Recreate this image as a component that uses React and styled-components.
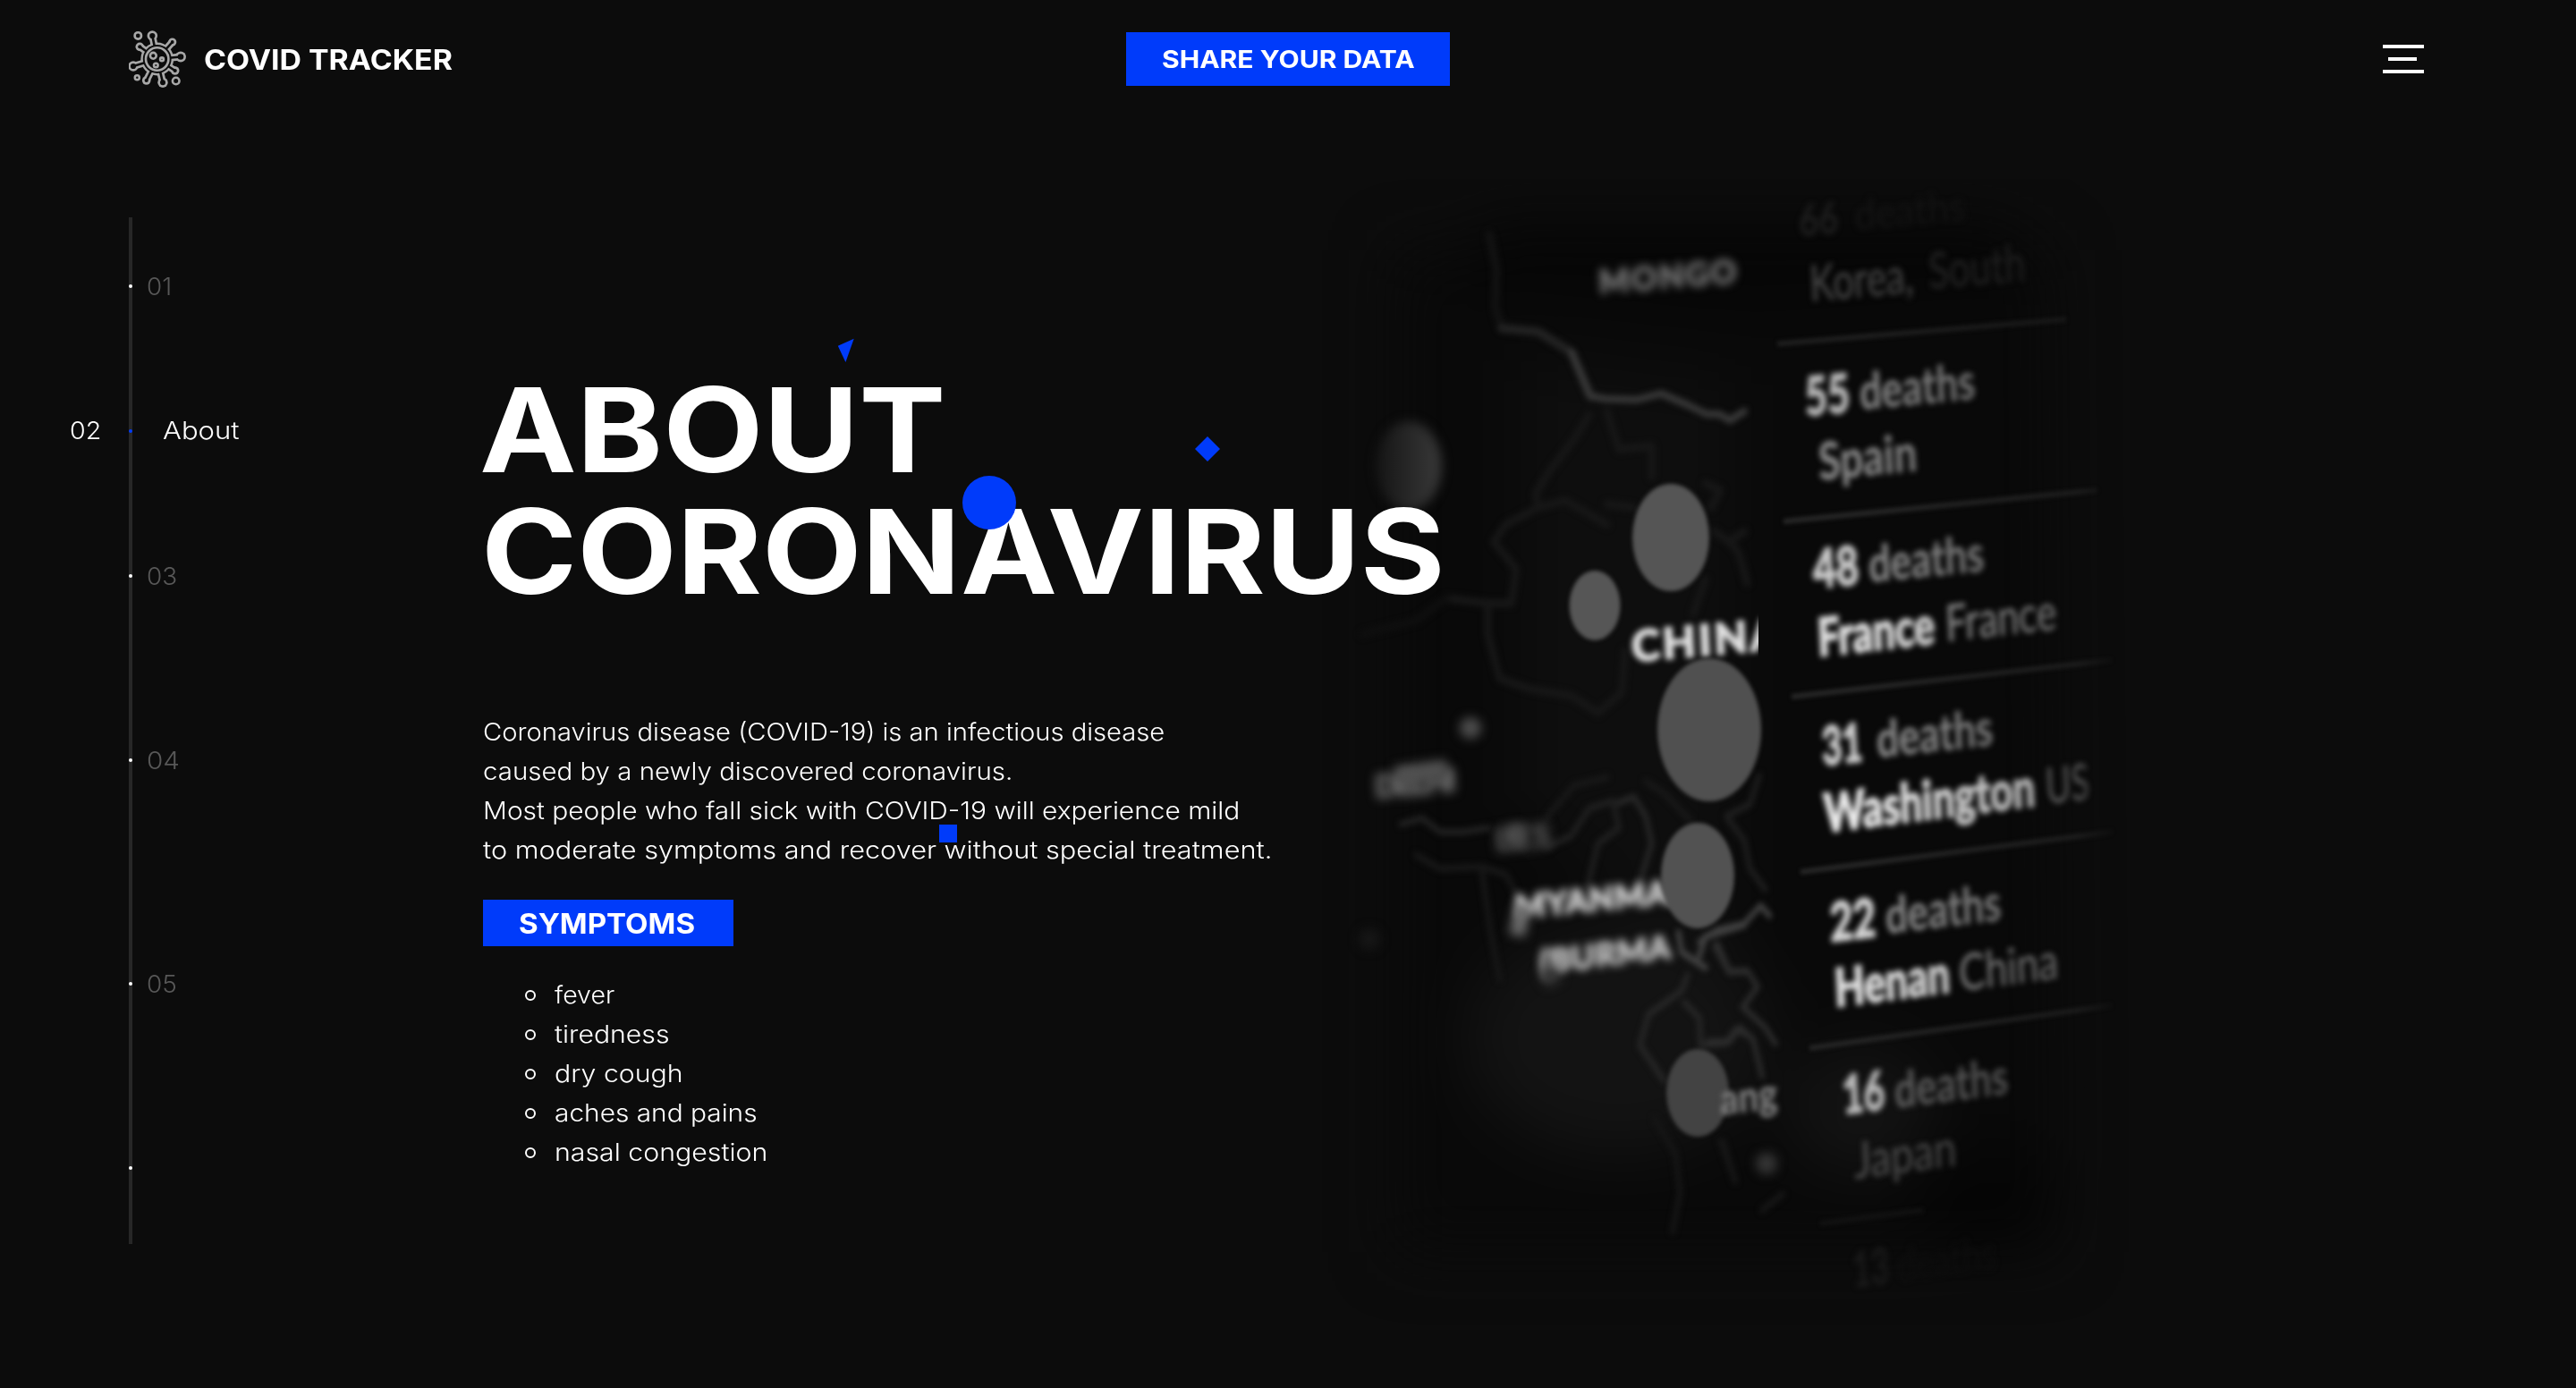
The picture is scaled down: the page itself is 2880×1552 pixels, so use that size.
import React from 'react';
import styled, { createGlobalStyle } from 'styled-components';

const INK = '#0c0c0c';
const BLUE = '#003bfa';

const GlobalStyle = createGlobalStyle`
  * { box-sizing: border-box; }
  html, body { margin: 0; background: ${INK}; }
  body { font-family: Inter, "Liberation Sans", sans-serif; color: #fff; overflow: hidden; }
  h1, h2, p, ul, ol { margin: 0; padding: 0; font-weight: inherit; list-style: none; }
`;

const Page = styled.div`
  position: relative;
  display: flex;
  flex-direction: column;
  width: 2880px;
  height: 1552px;
  overflow: hidden;
  background: ${INK};
`;

const Wide = styled.span`
  display: inline-block;
  white-space: nowrap;
  transform: scaleX(${(p) => p.$x});
  transform-origin: 0 50%;
`;

/* ---------- header ---------- */

const Header = styled.header`
  display: grid;
  grid-template-columns: 1fr 362px 1fr;
  align-items: center;
  flex: none;
  height: 132px;
  padding: 0 170px 0 144px;
`;

const Brand = styled.a`
  display: flex;
  align-items: center;
  gap: 20px;
  font-size: 31px;
  line-height: 40px;
  font-weight: 700;
`;

const BrandName = styled.span`
  padding-top: 2px;
`;

const ShareButton = styled.button`
  width: 362px;
  height: 60px;
  margin-left: 13px;
  padding: 0 0 0 40px;
  border: 0;
  background: ${BLUE};
  color: #fff;
  font: 700 27px/61px Inter, "Liberation Sans", sans-serif;
  text-align: left;
`;

const Burger = styled.div`
  justify-self: end;
  display: flex;
  flex-direction: column;
  align-items: center;
  gap: 10px;
  width: 46px;
`;

const BurgerBar = styled.span`
  width: ${(p) => (p.$short ? 32 : 46)}px;
  height: 4px;
  margin-right: ${(p) => (p.$short ? 2 : 0)}px;
  background: #fff;
`;

/* ---------- section navigation ---------- */

const Main = styled.main`
  display: flex;
  flex: 1;
  align-items: flex-start;
`;

const SectionNav = styled.nav`
  flex: none;
  width: 540px;
  padding-top: 111px;
`;

const Stop = styled.div`
  display: grid;
  grid-template-columns: 144px 4px 1fr;
  height: ${(p) => p.$h}px;
  padding-top: ${(p) => p.$top}px;
  align-content: start;
  align-items: center;
  background: linear-gradient(#272727, #272727) 144px 0 / 4px 100% no-repeat;
  font-size: 27px;
  line-height: 40px;
  font-weight: 300;
  color: ${(p) => (p.$active ? '#fff' : '#585858')};
`;

const StopIndex = styled.span`
  height: 40px;
  padding-left: 78px;
`;

const StopDot = styled.i`
  width: 4px;
  height: 4px;
  border-radius: 2px;
  background: ${(p) => (p.$active ? BLUE : '#fff')};
`;

const StopLabel = styled.span`
  height: 40px;
  padding: ${(p) => (p.$active ? '0 0 0 34px' : '1px 0 0 16px')};
`;

/* ---------- copy ---------- */

const Copy = styled.section`
  position: relative;
  z-index: 1;
  flex: none;
  width: 920px;
  padding-top: 281px;
`;

const Title = styled.h1`
  display: flex;
  flex-direction: column;
  font-size: 131px;
  line-height: 136px;
  font-weight: 700;
`;

const TitleLine = styled.span`
  margin-left: ${(p) => p.$nudge}px;
`;

const Lead = styled.p`
  display: flex;
  flex-direction: column;
  padding-top: 112px;
  font-size: 27px;
  line-height: 44px;
  font-weight: 300;
`;

const Tag = styled.h2`
  width: 280px;
  height: 52px;
  margin-top: 33px;
  padding-left: 40px;
  background: ${BLUE};
  font-size: 31px;
  line-height: 53px;
  font-weight: 700;
`;

const SymptomList = styled.ul`
  margin-top: 33px;
  padding-left: 47px;
`;

const Symptom = styled.li`
  display: flex;
  align-items: center;
  gap: 21px;
  font-size: 27px;
  line-height: 44px;
  font-weight: 300;

  &::before {
    content: '';
    width: 8px;
    height: 8px;
    border: 2px solid #fff;
    border-radius: 50%;
  }
`;

const MapPhoto = styled.svg`
  flex: none;
  display: block;
  width: 920px;
  height: 1300px;
  margin-top: 68px;
  font-family: Lato, "Open Sans", sans-serif;
`;

const Particles = styled.svg`
  position: absolute;
  inset: 0;
  z-index: 2;
  width: 2880px;
  height: 1552px;
  fill: ${BLUE};
  pointer-events: none;
`;

/* ---------- drawings ---------- */

const KNOBS = [
  [26.3, 6, 5.8], [48.7, 13, 4.6], [58, 29.5, 6], [51.7, 45, 4.8],
  [38, 58.3, 5.7], [19.7, 56, 4.8], [5, 40, 5.8], [12.3, 18.3, 4.8],
];

function VirusLogo() {
  const stem = ([x, y], i, w) => (
    <line key={i} x1="31.7" y1="32" x2={x} y2={y} strokeWidth={w} />
  );
  return (
    <svg width="64" height="64" viewBox="0 0 64 64" fill="none">
      <g fill="#a8a8a8" stroke="#a8a8a8">
        {KNOBS.map((k, i) => stem(k, i, 8))}
        {KNOBS.map(([x, y, r], i) => <circle key={i} cx={x} cy={y} r={r} stroke="none" />)}
        <circle cx="31.7" cy="32" r="18.4" stroke="none" />
      </g>
      <g fill={INK} stroke={INK}>
        {KNOBS.map((k, i) => stem(k, i, 2.6))}
        {KNOBS.map(([x, y, r], i) => <circle key={i} cx={x} cy={y} r={r - 2.7} stroke="none" />)}
        <circle cx="31.7" cy="32" r="15.9" stroke="none" />
      </g>
      <g stroke="#a8a8a8" strokeWidth="2.6">
        <circle cx="31.7" cy="32" r="12.7" />
        <circle cx="27.3" cy="28.3" r="3.4" />
        <circle cx="37" cy="32.3" r="1.9" />
        <circle cx="30.3" cy="39" r="2.3" />
        <circle cx="10.3" cy="5.9" r="3.7" />
        <circle cx="9.3" cy="52.7" r="2.5" />
        <circle cx="52.7" cy="56.5" r="3.8" />
      </g>
    </svg>
  );
}

/* x, baseline, drawn width, size, slope (deg), weight, fill, text */
const REPORT = [
  [2012, 264, 44, 48, 5, 700, '#1e1e1e', '66'],
  [2074, 257, 124, 46, 5, 400, '#141414', 'deaths'],
  [2024, 337, 116, 56, 5, 400, '#444', 'Korea,'],
  [2157, 323, 108, 56, 5, 400, '#262626', 'South'],
  [2019, 465, 50, 60, 5.4, 900, '#b8b8b8', '55'],
  [2080, 458, 129, 56, 5.4, 700, '#868686', 'deaths'],
  [2034, 537, 110, 58, 5.6, 700, '#8a8a8a', 'Spain'],
  [2028, 658, 51, 60, 5.6, 900, '#ccc', '48'],
  [2090, 651, 129, 56, 5.6, 700, '#8e8e8e', 'deaths'],
  [2033, 734, 131, 59, 6.2, 900, '#e0e0e0', 'France'],
  [2176, 717, 124, 56, 6.2, 400, '#a0a0a0', 'France'],
  [2038, 856, 45, 60, 6.2, 900, '#d0d0d0', '31'],
  [2099, 847, 130, 56, 6.2, 700, '#929292', 'deaths'],
  [2040, 931, 236, 60, 7.2, 900, '#ececec', 'Washington'],
  [2288, 899, 49, 56, 6.8, 400, '#7c7c7c', 'US'],
  [2047, 1053, 51, 60, 6.8, 900, '#d4d4d4', '22'],
  [2109, 1044, 129, 56, 6.8, 700, '#929292', 'deaths'],
  [2052, 1126, 129, 59, 7.4, 900, '#e0e0e0', 'Henan'],
  [2191, 1108, 111, 56, 7.4, 400, '#8e8e8e', 'China'],
  [2061, 1246, 47, 60, 7.4, 900, '#bcbcbc', '16'],
  [2119, 1239, 127, 55, 7.4, 700, '#606060', 'deaths'],
  [2074, 1318, 114, 56, 7.6, 400, '#4c4c4c', 'Japan'],
  [2072, 1440, 41, 56, 7.6, 700, '#1a1a1a', '13'],
  [2122, 1433, 110, 50, 7.6, 400, '#0f0f0f', 'deaths'],
];

const RULES = [
  ['M1987 384.5L2310 357', '#1e1e1e'],
  ['M1994 583L2345 548', '#262626'],
  ['M2003 779L2362 738', '#262626'],
  ['M2013 975L2363 930', '#262626'],
  ['M2023 1172L2362 1124', '#242424'],
  ['M2035 1368L2150 1353', '#121212'],
];

/* x, baseline, drawn width, size, slope, fill, blur, text */
const PLACES = [
  [1788, 328, 154, 36, 4.5, '#6a6a6a', 'b5', 'MONGO'],
  [1825, 740, 166, 48, 5, '#e0e0e0', 'b3', 'CHINA'],
  [1538, 892, 90, 34, 5, '#6c6c6c', 'b6', 'DELHI'],
  [1672, 952, 62, 36, 5, '#4c4c4c', 'b6', 'LES'],
  [1694, 1027, 196, 36, 5.5, '#d0d0d0', 'b5', 'MYANMAR'],
  [1722, 1089, 146, 36, 7, '#c0c0c0', 'b5', '(BURMA'],
];

const slant = (x, y, deg) =>
  `matrix(1 ${-Math.tan((deg * Math.PI) / 180)} 0.05 1 ${x} ${y})`;

function Map() {
  return (
    <MapPhoto viewBox="1460 200 920 1300" fill="none">
      <defs>
        {[2, 3, 4, 5, 6].map((n) => (
          <filter key={n} id={`b${n}`} x="-30%" y="-30%" width="160%" height="160%" colorInterpolationFilters="sRGB">
            <feGaussianBlur stdDeviation={n} />
          </filter>
        ))}
        <filter id="haze" x="-50%" y="-50%" width="200%" height="200%" colorInterpolationFilters="sRGB">
          <feGaussianBlur stdDeviation="34" />
        </filter>
        <linearGradient id="bubble" x1="0" x2="1">
          <stop offset="0" stopColor="#151515" />
          <stop offset="1" stopColor="#393939" />
        </linearGradient>
        <linearGradient id="fall" gradientUnits="userSpaceOnUse" x1="2080" y1="0" x2="2366" y2="0">
          <stop offset="0" stopColor="#fff" />
          <stop offset="0.85" stopColor="#a0a0a0" />
          <stop offset="1" stopColor="#111" />
        </linearGradient>
        <mask id="right" maskUnits="userSpaceOnUse" x="1460" y="200" width="920" height="1300">
          <rect x="1460" y="200" width="920" height="1300" fill="url(#fall)" />
        </mask>
        <clipPath id="mapArea"><rect x="1460" y="200" width="506" height="1300" /></clipPath>
      </defs>

      <g filter="url(#haze)">
        <path d="M1560 280H2290L2300 1400H1560Z" fill="#090909" />
        <path d="M1660 250H2250V330L1960 350L1640 320Z" fill="#060606" />
        <path d="M1700 400L1940 430V1120L1700 900Z" fill="#0e0e0e" />
        <ellipse cx="1810" cy="1160" rx="170" ry="130" fill="#131313" />
        <ellipse cx="2080" cy="1240" rx="80" ry="70" fill="#131313" />
        <ellipse cx="2220" cy="1340" rx="80" ry="60" fill="#050505" />
      </g>

      <g filter="url(#b3)" strokeLinejoin="round" strokeLinecap="round">
        <path d="M1665 262L1673 300L1672 345L1679 367" stroke="#121212" strokeWidth="9" />
        <path d="M1679 367L1720 371L1757 394L1778 443" stroke="#222" strokeWidth="10" />
        <path d="M1757 394L1778 443L1795 446L1830 447L1857 440L1885 452L1908 463L1922 463L1934 470L1950 460" stroke="#373737" strokeWidth="8" />
        <g transform="translate(1450 200) scale(0.3333 0.3827)" stroke="#171717" strokeWidth="24">
          <path d="M980 690L930 760L850 850L800 920L810 960L700 1010L660 1060L735 1140L720 1240L640 1240L500 1225" />
          <path d="M500 1225L400 1290L220 1330" stroke="#0f0f0f" />
          <path d="M810 960L900 940L1040 1010M1040 680L1080 790L1190 780L1190 870M1040 950L1130 960" />
          <path d="M640 1240L640 1330L680 1460L780 1490L920 1510L1010 1560L1090 1500L1100 1380M1370 1170L1330 1270" />
          <path d="M1370 890L1420 910L1390 960M1400 1030L1450 1060L1480 1090L1510 1180M1450 1060L1500 1030" />
        </g>
      </g>
      <g filter="url(#b3)" strokeLinejoin="round" strokeLinecap="round">
        <g transform="translate(1450 800) scale(0.3333 0.4337)" stroke="#262626" strokeWidth="18">
          <path d="M350 280L420 265L480 300L560 300L640 290M840 340L920 310L980 240L1060 220L1080 290L1010 330L975 440" stroke="#1f1f1f" />
          <path d="M1080 225L1130 210L1170 260L1190 330L1150 430" />
          <path d="M840 260L930 180L1040 160" stroke="#181818" />
          <path d="M400 360L480 395L620 390L700 410L730 450M620 400L650 560L680 680" stroke="#171717" />
          <path d="M1170 170L1230 200L1320 270" stroke="#181818" />
          <path d="M1310 670L1290 710L1180 770L1150 850L1230 940M1300 740L1350 780L1355 850L1440 845L1470 810L1500 820" />
          <path d="M1280 560L1290 610L1370 650M1350 620L1370 570L1500 540" stroke="#404040" />
          <path d="M1410 590L1450 660L1500 660" stroke="#303030" />
          <path d="M1200 1040L1270 1130L1285 1230L1260 1330M1430 1100L1470 1200" stroke="#161616" />
        </g>
        <g transform="translate(1900 840) scale(0.3333 0.4541)" stroke="#2c2c2c" strokeWidth="16">
          <path d="M200 60L170 130L90 160L150 220L170 290L220 340" stroke="#1f1f1f" />
          <path d="M0 470L60 440L150 425L205 380L235 405" stroke="#404040" />
          <path d="M50 480L100 545L160 540L195 580L145 630L220 680L255 720M30 715L100 715L135 680L180 710L210 800" />
          <path d="M70 960L120 1060M210 1130L280 1090" stroke="#171717" />
        </g>
      </g>

      <g clipPath="url(#mapArea)">
        {PLACES.map(([x, y, w, size, deg, fill, blur, text]) => (
          <g key={text} filter={`url(#${blur})`}>
            <text transform={slant(x, y, deg)} fontSize={size} fontWeight="900" fill={fill}
              stroke={fill} strokeWidth="2" textLength={w} lengthAdjust="spacing">{text}</text>
          </g>
        ))}
      </g>

      <g filter="url(#b6)">
        <ellipse cx="1575" cy="521" rx="37" ry="50" fill="url(#bubble)" />
        <circle cx="1644" cy="814" r="12" fill="#4c4c4c" />
        <circle cx="1692" cy="934" r="13" fill="#4a4a4a" />
        <circle cx="1975" cy="1301" r="12" fill="#353535" />
        <circle cx="1531" cy="1050" r="12" fill="#161616" />
        <path d="M1560 868L1618 860" stroke="#505050" strokeWidth="22" />
        <path d="M1703 1012L1696 1046" stroke="#6a6a6a" strokeWidth="18" />
        <path d="M1728 1082L1738 1100" stroke="#333" strokeWidth="20" />
      </g>
      <g filter="url(#b2)">
        <ellipse cx="1868" cy="601" rx="43" ry="60" fill="#555" />
        <ellipse cx="1783" cy="677" rx="28.5" ry="39" fill="#565656" />
        <ellipse cx="1911" cy="816" rx="58" ry="80" fill="#505050" />
        <ellipse cx="1898" cy="979" rx="41" ry="59" fill="#525252" />
        <ellipse cx="1898" cy="1222" rx="35" ry="49" fill="#434343" />
      </g>
      <g filter="url(#b3)">
        <text transform={slant(1924, 1247, 7)} fontSize="48" fontWeight="900" fill="#858585"
          textLength="64" lengthAdjust="spacingAndGlyphs">ang</text>
      </g>

      <g mask="url(#right)">
        <g filter="url(#b2)" strokeWidth="6">
          {RULES.map(([d, stroke]) => <path key={d} d={d} stroke={stroke} />)}
        </g>
        <g filter="url(#b3)">
          {REPORT.map(([x, y, w, size, deg, weight, fill, text]) => (
            <text key={`${x}-${y}`} transform={slant(x, y, deg)} fontSize={size} fontWeight={weight}
              fill={fill} stroke={fill} strokeWidth={weight === 900 ? 2 : 0.6}
              textLength={w} lengthAdjust="spacingAndGlyphs">{text}</text>
          ))}
        </g>
      </g>
    </MapPhoto>
  );
}

/* ---------- content ---------- */

const STOPS = [
  { id: '01', h: 154, top: 57, x: 1.03 },
  { id: '02', h: 170, top: 65, x: 1.15, active: true, label: 'About' },
  { id: '03', h: 154, top: 57, x: 1.035 },
  { id: '04', h: 258, top: 109, x: 1.1 },
  { id: '05', h: 242, top: 101, x: 1.035 },
  { id: '', h: 170, top: 65, x: 1 },
];

const LEAD = [
  ['Coronavirus disease (COVID-19) is an infectious disease', 1.08],
  ['caused by a newly discovered coronavirus.', 1.09],
  ['Most people who fall sick with COVID-19 will experience mild', 1.106],
  ['to moderate symptoms and recover without special treatment.', 1.1365],
];

const SYMPTOMS = [
  ['fever', 1.056],
  ['tiredness', 1.118],
  ['dry cough', 1.121],
  ['aches and pains', 1.105],
  ['nasal congestion', 1.122],
];

export default function App() {
  return (
    <Page>
      <GlobalStyle />
      <Header>
        <Brand>
          <VirusLogo />
          <BrandName><Wide $x={1.092}>COVID TRACKER</Wide></BrandName>
        </Brand>
        <ShareButton><Wide $x={1.114}>SHARE YOUR DATA</Wide></ShareButton>
        <Burger>
          <BurgerBar />
          <BurgerBar $short />
          <BurgerBar />
        </Burger>
      </Header>

      <Main>
        <SectionNav>
          {STOPS.map((s) => (
            <Stop key={s.h + s.id} $h={s.h} $top={s.top} $active={s.active}>
              <StopIndex>{s.active && <Wide $x={1.06}>{s.id}</Wide>}</StopIndex>
              <StopDot $active={s.active} />
              <StopLabel $active={s.active}>
                <Wide $x={s.x}>{s.active ? s.label : s.id}</Wide>
              </StopLabel>
            </Stop>
          ))}
        </SectionNav>

        <Copy>
          <Title>
            <TitleLine $nudge={-4}><Wide $x={1.1125}>ABOUT</Wide></TitleLine>
            <TitleLine $nudge={-2}><Wide $x={1.106}>CORONAVIRUS</Wide></TitleLine>
          </Title>
          <Lead>
            {LEAD.map(([text, x]) => <span key={text}><Wide $x={x}>{text}</Wide></span>)}
          </Lead>
          <Tag><Wide $x={1.067}>SYMPTOMS</Wide></Tag>
          <SymptomList>
            {SYMPTOMS.map(([text, x]) => (
              <Symptom key={text}><Wide $x={x}>{text}</Wide></Symptom>
            ))}
          </SymptomList>
        </Copy>

        <Map />
      </Main>

      <Particles viewBox="0 0 2880 1552">
        <path d="M954.7 378.7L936.8 386.7L945.4 405Z" />
        <circle cx="1106" cy="562" r="30" />
        <path d="M1350 488L1364 502L1350 516L1336 502Z" />
        <rect x="1050" y="922" width="20" height="20" />
      </Particles>
    </Page>
  );
}
